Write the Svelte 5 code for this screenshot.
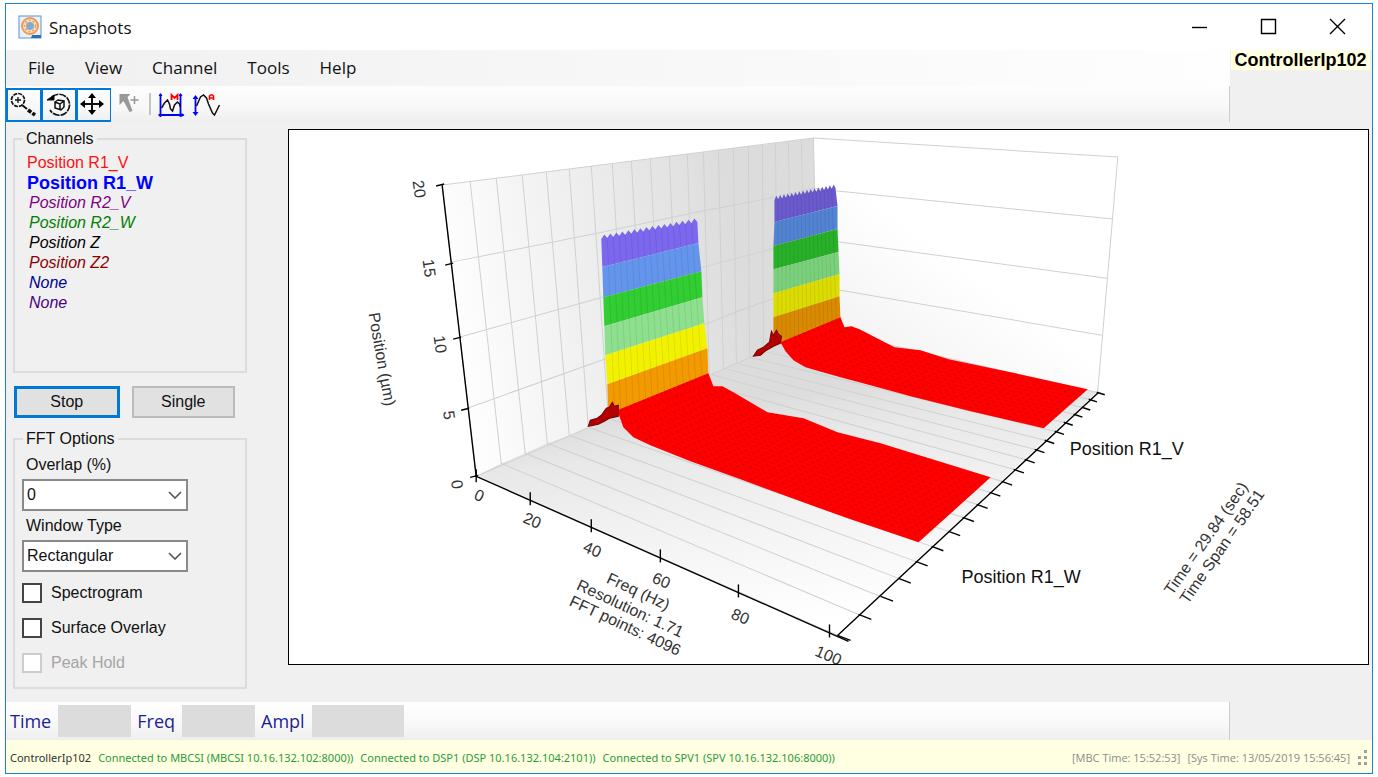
<script lang="ts">
type Point = [number, number]

const menus = ['File', 'View', 'Channel', 'Tools', 'Help']

const channels = [
  { name: 'Position R1_V', color: '#ff1010', state: 'on' },
  { name: 'Position R1_W', color: '#0000ff', state: 'active' },
  { name: 'Position R2_V', color: '#800080', state: 'off' },
  { name: 'Position R2_W', color: '#008000', state: 'off' },
  { name: 'Position Z', color: '#000000', state: 'off' },
  { name: 'Position Z2', color: '#8b0000', state: 'off' },
  { name: 'None', color: '#00008b', state: 'off' },
  { name: 'None', color: '#4b0082', state: 'off' },
]

const links = [
  'Connected to MBCSI (MBCSI 10.16.132.102:8000))',
  'Connected to DSP1 (DSP 10.16.132.104:2101))',
  'Connected to SPV1 (SPV 10.16.132.106:8000))',
]

let overlap = $state('0')
let windowType = $state('Rectangular')
let spectrogram = $state(false)
let overlay = $state(false)

// 3D box, projected: time steps along the wall top, wall foot and right floor edge
const wallTop: Point[] = [
  [442, 185], [470, 182], [496, 178], [522, 175], [546, 172], [569, 169], [591, 166],
  [612, 164], [631, 161], [650, 159], [669, 156], [687, 154], [703, 152], [718, 150],
  [733, 148], [748, 146], [762, 145], [775, 143], [788, 141], [801, 140], [813, 138],
]
const wallFoot: Point[] = [
  [476, 476], [501, 463], [525, 453], [547, 443], [569, 435], [588, 427], [608, 418],
  [627, 410], [645, 402], [662, 395], [679, 387], [694, 381], [709, 374], [723, 368],
  [736, 363], [749, 357], [763, 351], [777, 345], [791, 339], [804, 333], [817, 328],
]
const floorEdge: Point[] = [
  [837, 635], [858, 614], [880, 596], [898, 578], [915, 561], [931, 546], [948, 531],
  [962, 517], [976, 504], [989, 492], [1001, 481], [1013, 469], [1024, 459], [1034, 449],
  [1044, 440], [1054, 431], [1063, 422], [1073, 414], [1081, 407], [1088, 399], [1096, 392],
]

const levels = [
  'M451 262L603 232L697 212L760 200L814 188M813 188L837 191L1112 219',
  'M459 337L602 297L710 265L760 252L815 236M815 236L839 242L1106 278',
  'M467 408L604 359L710 322L740 310L817 283M817 283L840 290L1101 335',
]

const freqTicks = [
  { x: 476, y: 476, label: '0', lx: 479, ly: 495 },
  { x: 530, y: 499, label: '20', lx: 532, ly: 520 },
  { x: 591, y: 526, label: '40', lx: 592, ly: 549 },
  { x: 660, y: 556, label: '60', lx: 661, ly: 580 },
  { x: 738, y: 591, label: '80', lx: 740, ly: 616 },
  { x: 829, y: 631, label: '100', lx: 828, ly: 655 },
]

const posTicks = [
  { x: 442, y: 185, label: '20', lx: 419, ly: 189 },
  { x: 451, y: 264, label: '15', lx: 429, ly: 268 },
  { x: 459, y: 338, label: '10', lx: 440, ly: 344 },
  { x: 467, y: 409, label: '5', lx: 449, ly: 415 },
  { x: 476, y: 476, label: '0', lx: 457, ly: 484 },
]

// left and right hold the boundaries of the colour bands, from the peak down
const spectra = [
  {
    colors: ['#6a5acd', '#5383d3', '#28b128', '#7bd07b', '#dcdc00', '#d98a00'],
    left: [[774, 199], [774, 222], [773, 246], [773, 269], [773, 293], [773, 317], [773, 345]],
    right: [[835, 187], [837, 206], [837, 229], [838, 252], [839, 274], [839, 296], [840, 319]],
    back: [[840, 317], [844, 327], [851, 326], [859, 329], [894, 347], [920, 350], [948, 359], [1010, 372], [1087, 389]],
    front: [[780, 342], [785, 351], [793, 360], [805, 367], [840, 377], [870, 385], [910, 396], [970, 411], [1043, 428]],
    foot: '771,331 773,335 776,330 778,334 781,336 780,343 773,346 766,350 760,355 753,356 757,350 763,347 769,342',
    lines: 12,
  },
  {
    colors: ['#7b68ee', '#6495ed', '#32cd32', '#8ee08e', '#f2f200', '#f29a00'],
    left: [[601, 238], [602, 267], [603, 297], [604, 326], [605, 355], [607, 384], [608, 416]],
    right: [[697, 221], [698, 243], [701, 271], [702, 297], [704, 323], [707, 348], [708, 376]],
    back: [[708, 373], [713, 386], [722, 386], [733, 392], [767, 412], [803, 418], [837, 432], [880, 443], [990, 477]],
    front: [[617, 410], [623, 427], [633, 437], [650, 445], [690, 461], [740, 479], [800, 501], [850, 519], [918, 542]],
    foot: '606,408 609,407 612,402 614,406 618,405 618,416 609,418 604,421 598,424 588,426 590,420 597,418 601,415',
    lines: 20,
  },
] as { colors: string[], left: Point[], right: Point[], back: Point[], front: Point[], foot: string, lines: number }[]

function mix (a: Point, b: Point, t: number): Point {
  return [a[0] + (b[0] - a[0]) * t, a[1] + (b[1] - a[1]) * t]
}

function path (points: Point[]) {
  return points.map(p => p.map(v => Math.round(v * 10) / 10).join(',')).join(' ')
}

function crest (a: Point, b: Point) {
  const points: Point[] = []
  for (let i = 0; i <= 32; i++) {
    const p = mix(a, b, i / 32)
    points.push([p[0], p[1] + (i % 2 ? -3 : 1)])
  }
  return points
}

function band (s: typeof spectra[number], i: number) {
  const top = i === 0 ? crest(s.left[0], s.right[0]) : [s.left[i], s.right[i]]
  return path([...top, s.right[i + 1], s.left[i + 1]])
}

function traces (s: typeof spectra[number]) {
  return Array.from({ length: s.lines }, (_, n) =>
    path(s.back.map((p, i) => mix(p, s.front[i], (n + 1) / (s.lines + 1)))))
}

function ribs (s: typeof spectra[number]) {
  return Array.from({ length: 15 }, (_, n) =>
    path([mix(s.left[0], s.right[0], (n + 1) / 16), mix(s.left[6], s.right[6], (n + 1) / 16)]))
}
</script>

<main class="window">
  <header class="title-bar">
    <svg class="logo" viewBox="0 0 24 24" aria-hidden="true">
      <rect x="1" y="1" width="22" height="22" fill="#e9f1fa" stroke="#5b94cf" />
      <circle cx="12" cy="11" r="8" fill="#fbe3c8" stroke="#ee9a52" stroke-width="2" />
      <circle cx="12" cy="11" r="5.5" fill="none" stroke="#ee9a52" stroke-width="1.5" stroke-dasharray="2 2" />
      <circle cx="12" cy="11" r="4" fill="#86a9cc" />
      <path d="M14 20h9v3h-10z" fill="#2f6eb5" />
    </svg>
    <h1>Snapshots</h1>
    <div class="window-buttons">
      <button aria-label="Minimize"><svg viewBox="0 0 18 18"><path d="M1 9.5h15" /></svg></button>
      <button aria-label="Maximize"><svg viewBox="0 0 18 18"><path d="M1.5 1.5h14v14h-14z" /></svg></button>
      <button aria-label="Close"><svg viewBox="0 0 18 18"><path d="M1 1l15 15M16 1l-15 15" /></svg></button>
    </div>
  </header>

  <div class="bars">
    <div class="strips">
      <nav class="menu">
        {#each menus as menu}
          <button>{menu}</button>
        {/each}
      </nav>
      <div class="toolbar">
        <button class="tool pressed" aria-label="Zoom">
          <svg viewBox="2 2 32 30">
            <circle cx="12" cy="12" r="6.5" stroke-width="1.7" stroke-dasharray="4 1" />
            <path d="M9 12h6M12 9v6" stroke-width="1.3" />
            <path d="M16 17l5 4" stroke-width="2" />
            <path d="M22 22l7 5" stroke-width="3.6" stroke-dasharray="4 1.4" />
          </svg>
        </button>
        <button class="tool pressed" aria-label="Rotate">
          <svg viewBox="1 2 32 30">
            <path d="M10 9A10.500 10.500 0 1 1 8 22" stroke-width="1.7" stroke-dasharray="7 1" />
            <path d="M5 12l7-5v5z" fill="#000" />
            <path d="M13 14l3-2 6 1v6l-3 3-6-2zM13 14l5 2v6M18 16l4-3" stroke-width="1.5" />
          </svg>
        </button>
        <button class="tool pressed" aria-label="Pan">
          <svg viewBox="4 2 32 30">
            <path d="M8 16h20M18 6v20" stroke-width="2" />
            <path d="M6 16l5-4v8zM30 16l-5-4v8zM18 5l-4 5h8zM18 27l-4-5h8z" fill="#000" stroke="none" />
          </svg>
        </button>
        <button class="tool" aria-label="Add cursor" disabled>
          <svg viewBox="0 0 34 34">
            <path d="M8 6h11l-3 3 5 14-3 1-6-11-4 4z" fill="#999" stroke="none" />
            <path d="M19 12h8M23 8v8" stroke="#999" stroke-width="1.5" />
          </svg>
        </button>
        <span class="divider"></span>
        <button class="tool" aria-label="Marker mode">
          <svg viewBox="0 0 34 34">
            <path d="M7 6v23M27 6v23M5 27h25" stroke="#00f" stroke-width="1.8" />
            <path d="M5 8h4l-2-3zM25 8h4l-2-3zM28 25l3 2-3 2z" fill="#00f" stroke="none" />
            <path d="M8 20l3-5 3-3 2 4 1 5 2 2 2-6 3-3 2 2 1 3" stroke-width="1.5" />
            <path d="M18 12V7l3 3 3-3v5" stroke="#f00" stroke-width="1.8" />
          </svg>
        </button>
        <button class="tool" aria-label="Auto scale">
          <svg viewBox="0 0 34 34">
            <path d="M7 9v17" stroke="#00f" stroke-width="1.8" />
            <path d="M4 11h6l-3-4zM4 24h6l-3 4z" fill="#00f" stroke="none" />
            <path d="M8 18l4-9 3-2 3 3 2 6 4 9 2 2 3-6 2-4" stroke-width="1.5" />
            <path d="M21 12V8l1-1h2l1 1v4M21 10h4" stroke="#f00" stroke-width="1.6" />
          </svg>
        </button>
      </div>
    </div>
    <div class="controller"><strong>ControllerIp102</strong></div>
  </div>

  <div class="content">
    <aside>
      <fieldset class="channels">
        <legend>Channels</legend>
        <ul>
          {#each channels as channel}
            <li class={channel.state} style:color={channel.color}>{channel.name}</li>
          {/each}
        </ul>
      </fieldset>

      <div class="actions">
        <button class="default">Stop</button>
        <button>Single</button>
      </div>

      <fieldset class="options">
        <legend>FFT Options</legend>
        <label for="overlap">Overlap (%)</label>
        <div class="combo">
          <select id="overlap" bind:value={overlap}>
            <option>0</option>
            <option>50</option>
          </select>
          <svg viewBox="0 0 14 8" aria-hidden="true"><path d="M1 1l6 6 6-6" /></svg>
        </div>
        <label for="window-type">Window Type</label>
        <div class="combo">
          <select id="window-type" bind:value={windowType}>
            <option>Rectangular</option>
            <option>Hanning</option>
          </select>
          <svg viewBox="0 0 14 8" aria-hidden="true"><path d="M1 1l6 6 6-6" /></svg>
        </div>
        <label class="check"><input type="checkbox" bind:checked={spectrogram} />Spectrogram</label>
        <label class="check"><input type="checkbox" bind:checked={overlay} />Surface Overlay</label>
        <label class="check"><input type="checkbox" disabled />Peak Hold</label>
      </fieldset>
    </aside>

    <section class="plot">
      <svg viewBox="289 130 1078 534" role="img" aria-label="FFT waterfall">
        <defs>
          <linearGradient id="wall" gradientUnits="userSpaceOnUse" x1="442" y1="300" x2="740" y2="250">
            <stop offset="0" stop-color="#fff" />
            <stop offset="0.5" stop-color="#eee" />
            <stop offset="1" stop-color="#dcdcdc" />
          </linearGradient>
          <linearGradient id="floor" gradientUnits="userSpaceOnUse" x1="780" y1="390" x2="810" y2="620">
            <stop offset="0" stop-color="#dcdcdc" />
            <stop offset="0.2" stop-color="#e8e8e8" />
            <stop offset="0.45" stop-color="#f0f0f0" />
            <stop offset="1" stop-color="#fff" />
          </linearGradient>
          <linearGradient id="rear" gradientUnits="userSpaceOnUse" x1="820" y1="330" x2="900" y2="220">
            <stop offset="0" stop-color="#f2f2f2" />
            <stop offset="1" stop-color="#fff" />
          </linearGradient>
        </defs>

        <polygon points="813,138 1117,157 1097,391 817,328" fill="url(#rear)" />
        <polygon points={path([...wallTop, ...[...wallFoot].reverse()])} fill="url(#wall)" />
        <polygon points={path([...wallFoot, ...[...floorEdge].reverse()])} fill="url(#floor)" />

        <g class="grid">
          <path d="M442 185L813 138L1117 157L1097 391M476 476L817 328" />
          {#each levels as level}
            <path d={level} />
          {/each}
          {#each wallTop as top, i}
            <polyline points={path([top, wallFoot[i], floorEdge[i]])} />
          {/each}
        </g>

        <g class="axis">
          <path d="M442 185L476 476L848 641M837 635L1098 392" />
          {#each freqTicks as tick}
            <path d="M{tick.x} {tick.y - 7}v13" />
          {/each}
          {#each posTicks as tick}
            <path d="M{tick.x - 6} {tick.y + 1}l8 -2" />
          {/each}
          {#each floorEdge as [x, y], i}
            <path d="M{x} {y}l{13 - i / 4} {5 - i / 8}" />
          {/each}
        </g>

        {#each spectra as s}
          {#each s.colors as color, i}
            <polygon points={band(s, i)} fill={color} />
          {/each}
          {#each ribs(s) as rib}
            <polyline class="rib" points={rib} />
          {/each}
          <polygon points={path([...s.back, ...[...s.front].reverse()])} fill="#f00" />
          {#each traces(s) as trace}
            <polyline class="trace" points={trace} />
          {/each}
          <polygon class="foot" points={s.foot} />
        {/each}

        <g class="tick-labels">
          {#each freqTicks as tick}
            <text transform="translate({tick.lx} {tick.ly}) rotate(23)">{tick.label}</text>
          {/each}
          {#each posTicks as tick}
            <text transform="translate({tick.lx} {tick.ly}) rotate(82)">{tick.label}</text>
          {/each}
          <text transform="translate(382 359) rotate(80)">Position (µm)</text>
          <text transform="translate(638 591) rotate(25)">Freq (Hz)</text>
          <text transform="translate(630 608) rotate(25)">Resolution: 1.71</text>
          <text transform="translate(625 625) rotate(25)">FFT points: 4096</text>
          <text transform="translate(1205 538) rotate(-55)">Time = 29.84 (sec)</text>
          <text transform="translate(1221 546) rotate(-55)">Time Span = 58.51</text>
        </g>
        <text class="series" x="1069" y="455">Position R1_V</text>
        <text class="series" x="961" y="583">Position R1_W</text>
      </svg>
    </section>
  </div>

  <div class="readouts">
    <div class="readout-strip">
      <span>Time</span><output></output>
      <span>Freq</span><output></output>
      <span>Ampl</span><output class="wide"></output>
    </div>
  </div>

  <footer>
    <span class="host">ControllerIp102</span>
    {#each links as link}
      <span class="link">{link}</span>
    {/each}
    <span class="clock">[MBC Time: 15:52:53]</span>
    <span>[Sys Time: 13/05/2019 15:56:45]</span>
    <svg class="grip" viewBox="0 0 12 16" aria-hidden="true">
      <path d="M7 0h3v3H7zM7 6h3v3H7zM7 12h3v3H7zM1 6h3v3H1zM1 12h3v3H1z" />
    </svg>
  </footer>
</main>

<style>
  :global(body) {
    margin: 0;
    background: #fff;
  }

  * {
    box-sizing: border-box;
  }

  .window {
    margin: 3px 5px 2px;
    border: 1px solid #1883d7;
    background: #f0f0f0;
    font-family: 'Liberation Sans', Arial, sans-serif;
    font-size: 16px;
    color: #111;
  }

  button {
    font: inherit;
    color: inherit;
    padding: 0;
    border: 0;
    background: none;
  }

  .title-bar {
    display: flex;
    align-items: center;
    height: 46px;
    padding-left: 12px;
    background: #fff;
  }

  .logo {
    width: 24px;
    height: 24px;
  }

  h1 {
    margin: 0 0 0 7px;
    font: 17px 'Open Sans', sans-serif;
    color: #111;
  }

  .window-buttons {
    display: flex;
    margin-left: auto;
  }

  .window-buttons button {
    width: 69px;
    height: 30px;
  }

  .window-buttons svg {
    display: block;
    width: 18px;
    height: 18px;
    margin: 0 auto;
    fill: none;
    stroke: #000;
    stroke-width: 1.4;
  }

  .bars {
    display: flex;
  }

  .strips {
    flex: 1;
  }

  .menu {
    display: flex;
    height: 36px;
    padding-left: 10px;
    background: linear-gradient(to right, #f0f0f0, #fefefe);
    font: 17px 'Open Sans', sans-serif;
  }

  .menu button {
    padding: 0 14px 2px 12px;
    margin-right: 4px;
  }

  .toolbar {
    display: flex;
    align-items: center;
    height: 36px;
    background: linear-gradient(#fdfdfd, #f8f8f8 60%, #eee);
    border-right: 1px solid #ccc;
  }

  .tool {
    width: 35px;
    height: 34px;
    margin-top: 1px;
  }

  .tool svg {
    display: block;
    width: 100%;
    height: 100%;
    fill: none;
    stroke: #111;
  }

  .pressed {
    border: 2px solid #0078d7;
    border-right-width: 1px;
  }

  .divider {
    width: 2px;
    height: 22px;
    margin: 0 2px 0 3px;
    background: #c4c4c4;
  }

  .controller {
    width: 142px;
    padding: 0 2px 0 1px;
  }

  .controller strong {
    display: block;
    background: #ffffe1;
    font: 700 18px/20px 'Liberation Sans', sans-serif;
    color: #000;
    text-align: center;
    white-space: nowrap;
  }

  .content {
    display: flex;
    padding: 7px 3px 13px 7px;
  }

  aside {
    flex: none;
    width: 234px;
    margin-right: 41px;
  }

  fieldset {
    margin: 0;
    min-width: 0;
    padding: 0 8px;
    border: 2px solid #dcdcdc;
  }

  legend {
    padding: 0 3px;
    line-height: 20px;
  }

  .channels {
    height: 244px;
    padding-left: 8px;
  }

  ul {
    margin: 4px 0 0;
    padding: 0 0 0 4px;
    list-style: none;
    line-height: 20px;
  }

  .active {
    font-size: 18px;
    font-weight: bold;
  }

  .off {
    font-style: italic;
    padding-left: 2px;
  }

  .actions {
    display: flex;
    gap: 12px;
    padding: 13px 12px 11px 1px;
  }

  .actions button {
    flex: 1;
    height: 32px;
    background: #e1e1e1;
    border: 2px solid #bbb;
  }

  .actions .default {
    border: 3px solid #0078d7;
  }

  .options {
    height: 260px;
  }

  .options label {
    display: block;
    padding-left: 3px;
    line-height: 24px;
  }

  .options legend + label {
    padding-top: 4px;
  }

  .combo {
    display: grid;
    align-items: center;
    width: 166px;
    margin: 2px 0 3px -1px;
  }

  .combo select,
  .combo svg {
    grid-area: 1 / 1;
  }

  .combo select {
    appearance: none;
    height: 32px;
    padding: 0 4px 2px 3px;
    border: 2px solid #8a8a8a;
    border-radius: 0;
    background: #fff;
    font: inherit;
    color: inherit;
  }

  .combo svg {
    justify-self: end;
    width: 14px;
    height: 8px;
    margin-right: 6px;
    fill: none;
    stroke: #555;
    stroke-width: 1.6;
    pointer-events: none;
  }

  .options .check {
    display: flex;
    align-items: center;
    gap: 9px;
    height: 35px;
    padding-left: 0;
    margin-left: -1px;
  }

  .check input {
    appearance: none;
    width: 20px;
    height: 20px;
    margin: 0;
    border: 2px solid #444;
    background: #fff;
  }

  .check input:checked {
    background: #444;
  }

  .check input:disabled {
    border-color: #ccc;
  }

  .check:has(input:disabled) {
    color: #a5a5a5;
  }

  .plot {
    flex: 1;
    align-self: flex-start;
    min-width: 0;
    border: 1px solid #000;
    background: #fff;
  }

  .plot svg {
    display: block;
    width: 100%;
  }

  .grid * {
    fill: none;
    stroke: #cfd1d1;
  }

  .axis path {
    fill: none;
    stroke: #000;
    stroke-width: 1.4;
  }

  .rib {
    stroke: #000;
    stroke-opacity: 0.08;
  }

  .trace {
    fill: none;
    stroke: #900;
    stroke-opacity: 0.35;
    stroke-dasharray: 3 5;
  }

  .foot {
    fill: #b40000;
    stroke: #700;
  }

  .tick-labels text {
    font-size: 16px;
    fill: #333;
    text-anchor: middle;
    dominant-baseline: central;
  }

  .series {
    font-size: 18px;
    fill: #111;
  }

  .readouts {
    padding-right: 142px;
  }

  .readout-strip {
    display: flex;
    align-items: center;
    height: 38px;
    padding-left: 4px;
    border-right: 1px solid #ccc;
    background: linear-gradient(#fff, #f8f8f8 60%, #eee);
    font: 18px 'Open Sans', sans-serif;
    color: #1c1c96;
  }

  output {
    width: 73px;
    height: 32px;
    margin: 0 6px 0 7px;
    background: #dcdcdc;
  }

  output.wide {
    width: 92px;
  }

  footer {
    display: flex;
    align-items: center;
    gap: 7px;
    height: 33px;
    padding: 2px 3px 0 4px;
    background: #ffffe1;
    font: 11px 'Open Sans', sans-serif;
    color: #8c8c8c;
    white-space: nowrap;
  }

  .host,
  .link {
    font-family: 'Noto Sans', sans-serif;
  }

  .host {
    color: #333;
  }

  .link {
    color: #2d9a3c;
  }

  .clock {
    margin-left: auto;
  }

  .grip {
    width: 12px;
    height: 16px;
    fill: #a0a0a0;
  }
</style>
